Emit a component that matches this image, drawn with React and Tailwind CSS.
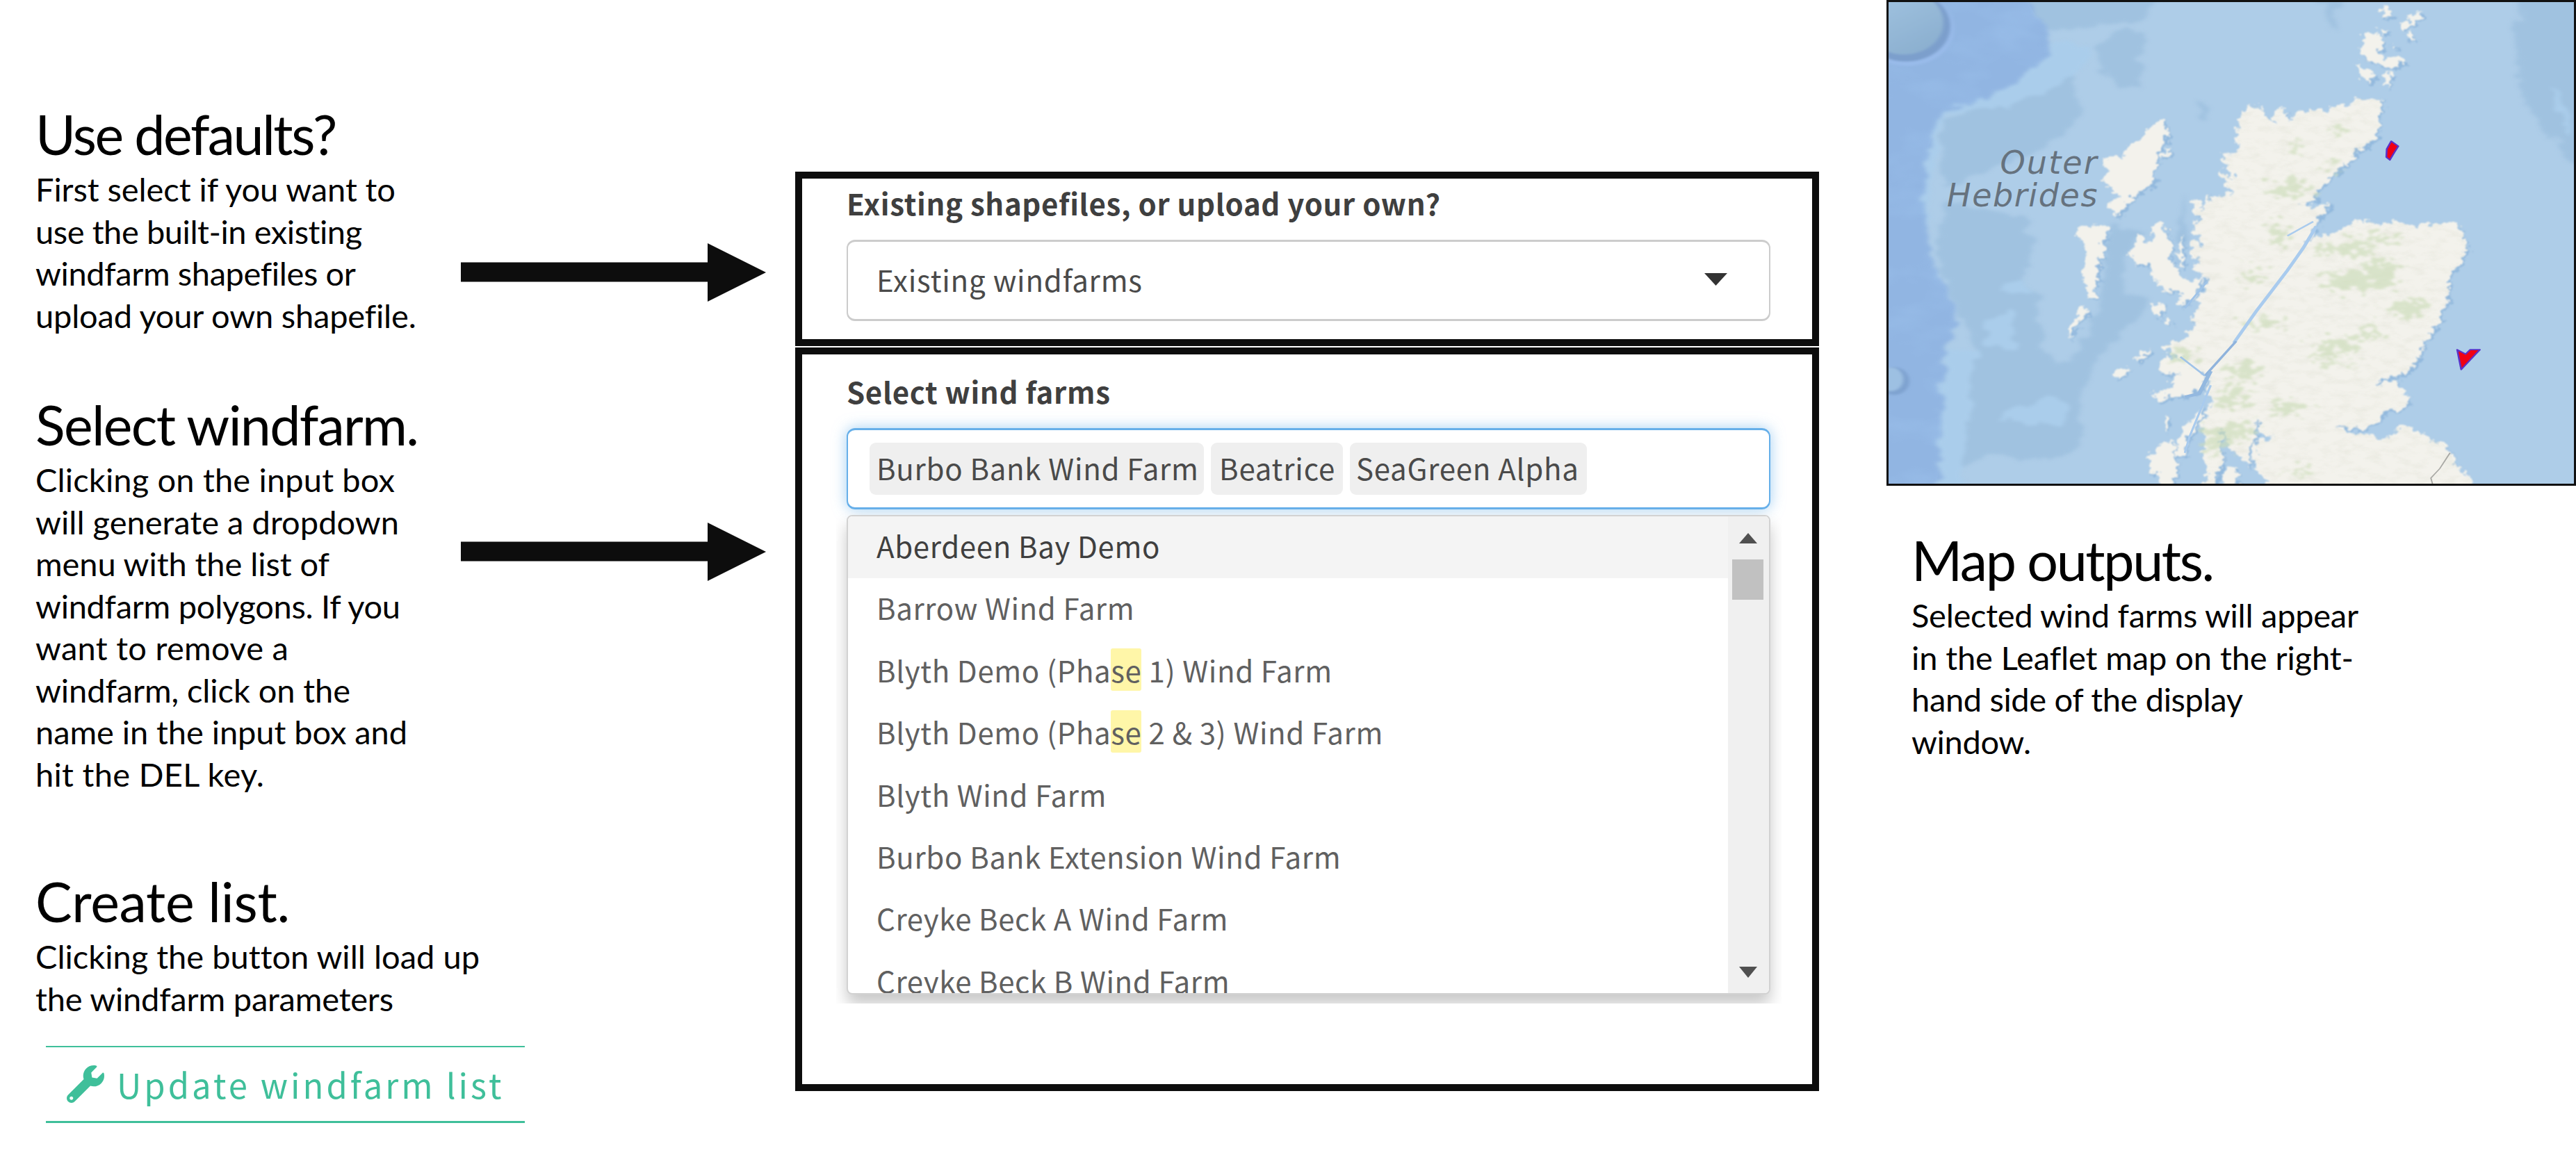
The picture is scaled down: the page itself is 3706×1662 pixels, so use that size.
import { FaWrench } from 'react-icons/fa';

function Block({ title, lines, className }) {
  return (
    <section className={className}>
      <h2 className={'text-[79px] leading-[97px] whitespace-pre text-black ' + title[1]}>{title[0]}</h2>
      <p className="mt-px text-[47px] leading-[60.5px] text-black">
        {lines.map(([t, tracking]) => <span key={t} className={'block whitespace-pre ' + tracking}>{t}</span>)}
      </p>
    </section>
  );
}

function Arrow({ className }) {
  return (
    <svg className={className} viewBox="0 0 439 84" preserveAspectRatio="none" fill="#0d0d0d">
      <path d="M0 27.5H355V0L439 42L355 84V55.5H0Z" />
    </svg>
  );
}

const sea = {
  deep: 'M-40 -40H320L355 50L385 80L380 180L340 230L280 290L215 330L155 345L130 400L115 470L105 600L105 720L125 840L160 930L182 1000L165 1090L150 1130L145 1300L130 1640H-40Z',
  mid: [
    'M215 345L340 300L440 235L450 310L460 370L400 440L340 500L280 520L150 600L140 470L155 380Z',
    'M150 640L330 690L355 760L330 880L360 960L375 1120L400 1160L450 1150L460 1200L460 1390L420 1450L320 1465L250 1440L190 1490L220 1110L185 990L140 850Z',
    'M520 720L600 740L560 800L545 930L620 950L540 1060L480 1180L450 1290L430 1160L500 980Z',
    'M485 150L560 90L600 110L590 200L590 290L540 270L500 210Z',
    'M385 -10H650L600 60L540 70L470 90L400 100L350 60L320 -10Z',
    'M1445 -10H1600V560L1545 500L1520 440L1475 380L1440 280L1430 120Z',
    'M985 -10H1050L1030 50L1025 110L1010 60Z',
    'M715 320L735 330L745 380L730 375Z',
    'M690 620L700 660L695 780L680 850L670 760L685 690Z',
  ],
  light: [
    'M390 120L480 150L450 230L380 290L280 340L160 360L135 450L120 600L112 720L106 720L106 600L116 470L131 400L156 345L216 330L281 290L341 230L381 180Z',
    'M155 1120L225 1100L205 1280L185 1600H135L146 1300Z',
    'M265 1330L390 1260L430 1290L420 1350L340 1345Z',
    'M235 1030L300 990L310 1060L300 1120L240 1090Z',
    'M270 920L330 890L345 925L290 935Z',
    'M1510 270L1545 320L1556 440L1530 380Z',
  ],
};

const land = [
  'M835 328L855 340L868 350L880 385L887 395L890 350L900 343L915 355L920 378L928 388L932 368L950 352L975 352L1010 350L1035 335L1065 332L1080 312L1100 318L1130 315L1132 335L1122 365L1130 400L1118 440L1085 475L1050 525L1015 565L1002 590L987 603L982 636L950 648L975 660L1000 652L1018 640L1010 665L990 700L978 740L958 785L985 748L1010 750L1030 737L1060 720L1070 700L1090 695L1110 705L1130 715L1160 705L1200 715L1250 712L1285 705L1305 715L1315 745L1325 790L1310 830L1290 870L1283 910L1280 955L1265 1000L1255 1035L1245 1060L1228 1085L1220 1115L1212 1150L1190 1180L1178 1195L1135 1203L1112 1225L1165 1207L1168 1230L1195 1265L1195 1285L1165 1305L1140 1303L1120 1345L1090 1366L1030 1358L1060 1375L1100 1380L1135 1397L1160 1375L1170 1355L1190 1355L1215 1375L1240 1395L1270 1410L1285 1440L1300 1480L1335 1530L1350 1560H890L860 1510L845 1470L850 1402L890 1394L862 1375L850 1335L848 1400L838 1430L836 1485L818 1462L800 1440L785 1400L770 1365L768 1420L778 1460L765 1500L755 1560H728L740 1500L730 1440L738 1390L728 1340L745 1300L752 1262L738 1250L742 1225L750 1200L735 1188L700 1170L680 1140L648 1112L645 1100L665 1085L700 1078L695 1062L720 1025L702 1028L706 1000L725 975L712 955L735 925L735 880L710 850L722 835L702 800L703 765L715 762L730 790L722 752L708 735L712 705L728 690L712 684L708 645L720 640L733 668L742 615L752 635L780 612L800 622L780 585L763 552L770 540L790 565L800 572L785 530L770 485L800 490L810 470L805 420L815 370Z',
  'M641 372L652 420L644 456L628 489L621 537L623 574L603 603L577 622L561 648L538 692L514 651L540 626L527 604L504 574L517 552L509 515L525 489L551 500L558 471L587 442L618 401Z',
  'M657 476L652 498L639 511L632 493Z',
  'M447 736L468 718L514 718L517 736L507 773L504 817L496 832L496 883L486 913L493 942L478 949L462 898L465 824L473 795L449 758Z',
  'M457 972L473 990L452 1023L431 1075L429 1052L447 1001Z',
  'M631 703L647 729L660 780L660 824L675 876L701 890L733 876L727 905L706 949L683 975L675 964L686 927L647 927L623 890L605 839L582 846L564 810L574 780L587 743L605 780L621 773L616 729Z',
  'M688 743L684 800L688 850L680 850L672 810L680 770Z',
  'M613 964L639 964L641 993L631 1008L613 985Z',
  'M650 1010L662 1020L655 1035L646 1025Z',
  'M612 1105L605 1130L585 1150L582 1138Z',
  'M530 1180L562 1168L555 1190L540 1206L530 1195Z',
  'M635 1155L650 1130L690 1150L737 1196L730 1235L700 1258L665 1260L630 1275L617 1250L650 1245L665 1220L650 1215L675 1190L635 1185Z',
  'M733 1285L722 1340L695 1400L690 1450L672 1455L668 1420L690 1360L710 1325Z',
  'M645 1405L665 1400L665 1440L675 1490L665 1530L640 1560L628 1560L635 1500L605 1505L615 1440Z',
  'M652 1322L656 1340L648 1372L642 1350Z',
  'M785 1488L805 1492L812 1530L800 1560L775 1560L770 1510Z',
  'M1090 110L1120 105L1140 140L1125 165L1140 185L1165 175L1185 195L1160 220L1120 205L1085 180Z',
  'M1072 200L1095 215L1115 240L1105 265L1085 250Z',
  'M1140 225L1156 238L1147 282L1138 265Z',
  'M1138 15L1160 50L1140 58L1130 40Z',
  'M1122 88L1148 95L1140 110Z',
  'M1190 55L1226 32L1212 66L1180 98L1172 78L1200 62Z',
  'M1195 98L1208 130L1186 122Z',
  'M1155 138L1166 150L1156 160Z',
];

const woods = [
  [930, 600, 50, 30], [900, 740, 26, 40], [1050, 790, 70, 25], [1130, 760, 45, 16], [1060, 890, 60, 40], [1130, 870, 40, 60], [1190, 980, 55, 28],
  [1030, 1100, 60, 28], [1020, 1150, 50, 14], [1110, 1060, 20, 30], [850, 880, 28, 30], [870, 1030, 50, 18], [920, 1300, 45, 24], [800, 1260, 40, 40],
  [820, 1180, 45, 30], [760, 1400, 30, 50], [810, 1370, 40, 30], [690, 1130, 28, 26], [945, 1500, 20, 12], [1040, 410, 18, 22], [1015, 530, 16, 20], [940, 460, 12, 26],
];

function Map() {
  return (
    <svg className="block h-[693px] w-[986px]" viewBox="25 7 1538 1531" preserveAspectRatio="none">
      <defs>
        <filter id="soft" x="-10%" y="-10%" width="120%" height="120%" colorInterpolationFilters="sRGB">
          <feTurbulence type="fractalNoise" baseFrequency="0.025" numOctaves="4" seed="4" result="n" />
          <feDisplacementMap in="SourceGraphic" in2="n" scale="45" xChannelSelector="R" yChannelSelector="G" />
          <feGaussianBlur stdDeviation="5" />
        </filter>
        <filter id="coast" x="-5%" y="-5%" width="110%" height="110%" colorInterpolationFilters="sRGB">
          <feTurbulence type="fractalNoise" baseFrequency="0.06" numOctaves="3" seed="9" result="n" />
          <feDisplacementMap in="SourceGraphic" in2="n" scale="34" xChannelSelector="R" yChannelSelector="G" />
          <feGaussianBlur stdDeviation="1.8" />
        </filter>
        <filter id="wood" x="-50%" y="-50%" width="200%" height="200%" colorInterpolationFilters="sRGB">
          <feTurbulence type="fractalNoise" baseFrequency="0.05" numOctaves="3" seed="2" result="n" />
          <feDisplacementMap in="SourceGraphic" in2="n" scale="110" xChannelSelector="R" yChannelSelector="G" />
          <feGaussianBlur stdDeviation="3" />
        </filter>
        <filter id="blur"><feGaussianBlur stdDeviation="4" /></filter>
        <filter id="waves" x="0" y="0" width="100%" height="100%" colorInterpolationFilters="sRGB">
          <feTurbulence type="fractalNoise" baseFrequency="0.008 0.012" numOctaves="3" seed="12" />
          <feColorMatrix values="0 0 0 0 0.64  0 0 0 0 0.79  0 0 0 0 0.95  2.4 0 0 0 -1" />
          <feComposite in2="SourceAlpha" operator="in" />
        </filter>
        <filter id="relief" x="0" y="0" width="100%" height="100%" colorInterpolationFilters="sRGB">
          <feTurbulence type="fractalNoise" baseFrequency="0.03 0.045" numOctaves="4" seed="7" />
          <feColorMatrix values="0 0 0 0 0.8  0 0 0 0 0.81  0 0 0 0 0.74  2.2 0 0 0 -0.95" />
          <feComposite in2="SourceAlpha" operator="in" />
        </filter>
        <linearGradient id="mount" x1="0" y1="0" x2="0.6" y2="1">
          <stop offset="0" stopColor="#a3c5e2" /><stop offset="1" stopColor="#8cb0d0" />
        </linearGradient>
      </defs>
      <rect width="1600" height="1600" fill="#aecde8" />
      <g filter="url(#soft)">
        {sea.mid.map((d) => <path key={d} d={d} fill="#a0c2e0" />)}
        <path d={sea.deep} fill="#91b5e2" />
        {sea.light.map((d) => <path key={d} d={d} fill="#aacdeb" />)}
      </g>
      <path d={sea.deep} filter="url(#waves)" opacity="0.28" />
      <g filter="url(#blur)">
        <ellipse cx="66" cy="92" rx="106" ry="118" fill="#99bbea" />
        <ellipse cx="64" cy="84" rx="100" ry="112" fill="#7c9fcc" />
        <ellipse cx="38" cy="1212" rx="34" ry="44" fill="#7fa3d0" />
      </g>
      <ellipse cx="60" cy="72" rx="88" ry="102" fill="url(#mount)" filter="url(#blur)" />
      <ellipse cx="30" cy="1206" rx="28" ry="38" fill="#9dc0e2" filter="url(#blur)" />
      <g filter="url(#coast)">
        <g fill="#93b9dd" transform="translate(5 7)">{land.map((d) => <path key={d} d={d} />)}</g>
        <g fill="#f3f2ec">{land.map((d) => <path key={d} d={d} />)}</g>
      </g>
      <path d={land[0]} filter="url(#relief)" opacity="0.2" />
      <g filter="url(#wood)" fill="#cbdcb8" opacity="0.65">
        {woods.map(([x, y, rx, ry]) => <ellipse key={x + '-' + y} cx={x} cy={y} rx={rx * 0.85} ry={ry * 0.85} />)}
      </g>
      <g fill="none" stroke="#a9cbee">
        <path d="M985 720L955 790L920 860L885 925L850 990L800 1090" strokeWidth="8" />
        <path d="M805 1085L735 1195" strokeWidth="6" stroke="#8fb3dc" />
        <path d="M748 1180L722 1252L690 1262" strokeWidth="9" stroke="#93b8df" />
        <path d="M748 1225L700 1390L690 1440" strokeWidth="5" />
        <path d="M920 750L978 705" strokeWidth="5" />
        <path d="M680 1135L735 1195" strokeWidth="5" stroke="#9fc3e8" />
        <path d="M740 895L690 980" strokeWidth="5" stroke="#9fc3e8" />
        <path d="M1285 1440L1262 1490L1242 1520L1246 1540" strokeWidth="3" stroke="#a8a8a4" />
      </g>
      <g fill="#f00014" stroke="#5a32c8" strokeWidth="4" strokeLinejoin="round">
        <path d="M1153 449L1169 465L1160 485L1150 509L1142 500L1143 474Z" />
        <path d="M1301 1112L1320 1126L1330 1112L1352 1112L1310 1175Z" />
      </g>
    </svg>
  );
}

const rows = [
  ['Aberdeen Bay Demo', 'tracking-[0.64px]'],
  ['Barrow Wind Farm', 'tracking-[0.6px]'],
  ['Blyth Demo (Phase 1) Wind Farm', 'tracking-[0.62px]'],
  ['Blyth Demo (Phase 2 & 3) Wind Farm', 'tracking-[0.62px]'],
  ['Blyth Wind Farm', 'tracking-[0.6px]'],
  ['Burbo Bank Extension Wind Farm', 'tracking-[0.66px]'],
  ['Creyke Beck A Wind Farm', 'tracking-[0.58px]'],
  ['Creyke Beck B Wind Farm', 'tracking-[0.58px]'],
];

function RowText({ text }) {
  const i = text.indexOf('Phase');
  if (i < 0) return text;
  return <>{text.slice(0, i + 3)}<mark className="rounded-[3px] bg-[#fff6a8] text-inherit">se</mark>{text.slice(i + 5)}</>;
}

export default function App() {
  return (
    <main className="flex h-[1662px] w-[3706px] items-start overflow-hidden bg-white font-['Lato',sans-serif]">
      <div className="w-[663px] pt-[144px] pl-[51px]">
        <Block className="h-[418px]" title={['Use defaults?', 'tracking-[-2.5px]']} lines={[
          ['First select if you want to', 'tracking-[-0.07px]'], ['use the built-in existing', 'tracking-[-0.43px]'],
          ['windfarm shapefiles or', 'tracking-[-0.38px]'], ['upload your own shapefile.', 'tracking-[-0.19px]']]} />
        <Block className="h-[686px]" title={['Select windfarm.', 'tracking-[-1.72px]']} lines={[
          ['Clicking on the input box', 'tracking-[0.16px]'], ['will generate a dropdown', 'tracking-[0.03px]'],
          ['menu with the list of', 'tracking-[-0.07px]'], ['windfarm polygons. If you', 'tracking-[-0.28px]'],
          ['want to remove a', 'tracking-[0.29px]'], ['windfarm, click on the', 'tracking-[-0.09px]'],
          ['name in the input box and', 'tracking-[-0.07px]'], ['hit the DEL key.', 'tracking-[0.3px]']]} />
        <Block className="h-[257px]" title={['Create list.', 'tracking-[-0.26px]']} lines={[
          ['Clicking the button will load up', 'tracking-[0.02px]'], ['the windfarm parameters', 'tracking-[-0.19px]']]} />
        <button className="ml-[15px] flex h-[111px] w-[689px] items-center border-t-2 border-b-3 border-[#3fbf9a] pl-[30px] font-['Noto_Sans_CJK_JP',sans-serif] text-[49px] leading-[100px] tracking-[4px] whitespace-pre text-[#3fbf9a]">
          <FaWrench className="mr-[18px] size-[54px]" />Update windfarm list
        </button>
      </div>
      <div className="w-[481px] pt-[350px]">
        <Arrow className="block h-[84px] w-[439px]" />
        <Arrow className="mt-[318px] block h-[84px] w-[439px]" />
      </div>
      <div className="flex w-[1473px] flex-col gap-0.5 pt-[247px] font-['Noto_Sans_CJK_JP',sans-serif] text-[42px] whitespace-pre text-[#4a4a4a]">
        <section className="h-[251px] border-10 border-[#0d0d0d] pt-[5px] pr-[60px] pl-[64px]">
          <h3 className="leading-[60px] font-bold tracking-[0.65px] text-[#3f3f3f]">Existing shapefiles, or upload your own?</h3>
          <div className="mt-[23px] flex h-[117px] items-center justify-between rounded-[12px] border-x-2 border-y-3 border-[#cccccc] pr-[60px] pb-[3px] pl-[41px] leading-[108px] tracking-[0.78px]">
            Existing windfarms
            <svg className="h-[18px] w-[33px]" viewBox="0 0 33 18" preserveAspectRatio="none" fill="#333"><path d="M0 0H33L16.5 18Z" /></svg>
          </div>
        </section>
        <section className="h-[1070px] border-10 border-[#0d0d0d] pt-[23px]">
          <h3 className="px-[64px] leading-[60px] font-bold tracking-[0.64px] text-[#3f3f3f]">Select wind farms</h3>
          <div className="mt-[23px] mr-[60px] ml-[64px] flex h-[117px] gap-[10px] rounded-[12px] border-x-2 border-y-3 border-[#66afe9] pt-[18px] pl-[31px] leading-[72px] shadow-[0_0_20px_rgba(102,175,233,0.6)]">
            <span className="h-[75px] w-[481px] rounded-[9px] bg-[#efefef] pl-[10px] tracking-[0.7px]">Burbo Bank Wind Farm</span>
            <span className="h-[75px] w-[190px] rounded-[9px] bg-[#efefef] pl-[12px] tracking-[0.8px]">Beatrice</span>
            <span className="h-[75px] w-[341px] rounded-[9px] bg-[#efefef] pl-[9px] tracking-[0.74px]">SeaGreen Alpha</span>
          </div>
          <div className="mr-[44px] ml-[49px] h-[711px] overflow-hidden pt-2 pr-[16px] pl-[15px]">
            <div className="flex h-[690px] overflow-hidden rounded-[8px] border-2 border-[#d2d2d2] bg-white shadow-[0_14px_22px_rgba(0,0,0,0.22)]">
              <ul className="w-[1266px] text-[#606060]">
                {rows.map(([t, tracking], i) => (
                  <li key={t} className={(i === 0 ? 'h-[89.4px] bg-[#f4f4f4] pl-[41px] leading-[84px] text-[#3f3f3f] ' : 'h-[89.4px] pl-[41px] leading-[84px] ') + tracking}>
                    <RowText text={t} />
                  </li>
                ))}
              </ul>
              <div className="flex flex-1 flex-col items-center bg-[#f0f0f0] pt-6 pr-0.5">
                <svg className="h-[15px] w-[26px]" viewBox="0 0 26 15" preserveAspectRatio="none" fill="#505050"><path d="M0 15H26L13 0Z" /></svg>
                <div className="mt-[23px] h-[58px] w-[45px] bg-[#c1c1c1]" />
                <svg className="mt-[528px] h-[16px] w-[26px]" viewBox="0 0 26 16" preserveAspectRatio="none" fill="#505050"><path d="M0 0H26L13 16Z" /></svg>
              </div>
            </div>
          </div>
        </section>
      </div>
      <div className="ml-[97px] w-[992px]">
        <div className="relative h-[699px] border-3 border-[#111]">
          <Map />
          <p className="absolute top-[208px] right-[684px] text-right font-['DejaVu_Sans',sans-serif] text-[46px] leading-[47px] text-[#66727e] italic">
            <span className="block tracking-[2.2px]">Outer</span>
            <span className="block tracking-[1.6px]">Hebrides</span>
          </p>
        </div>
        <Block className="mt-[58px] ml-[36px]" title={['Map outputs.', 'tracking-[-2.4px]']} lines={[
          ['Selected wind farms will appear', 'tracking-[-0.26px]'], ['in the Leaflet map on the right-', 'tracking-[-0.1px]'],
          ['hand side of the display', 'tracking-[-0.35px]'], ['window.', 'tracking-[-0.34px]']]} />
      </div>
    </main>
  );
}
